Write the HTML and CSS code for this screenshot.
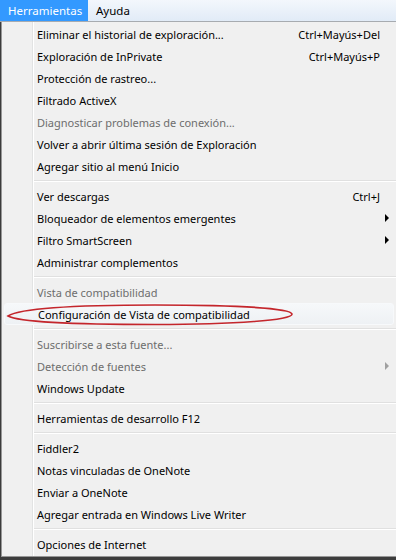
FILE: index.html
```html
<!DOCTYPE html>
<html lang="es">
<head>
<meta charset="utf-8">
<link rel="stylesheet" href="styles.css">
</head>
<body>
<div class="screen">
  <div class="menubar">
    <span class="top active">Herramientas</span>
    <span class="top">Ayuda</span>
  </div>
  <div class="menu">
    <div class="item"><span class="label">Eliminar el historial de exploración...</span><span class="key">Ctrl+Mayús+Del</span></div>
    <div class="item"><span class="label">Exploración de InPrivate</span><span class="key">Ctrl+Mayús+P</span></div>
    <div class="item"><span class="label">Protección de rastreo...</span></div>
    <div class="item"><span class="label">Filtrado ActiveX</span></div>
    <div class="item disabled"><span class="label">Diagnosticar problemas de conexión...</span></div>
    <div class="item"><span class="label">Volver a abrir última sesión de Exploración</span></div>
    <div class="item"><span class="label">Agregar sitio al menú Inicio</span></div>
    <div class="sep"></div>
    <div class="item"><span class="label">Ver descargas</span><span class="key">Ctrl+J</span></div>
    <div class="item"><span class="label">Bloqueador de elementos emergentes</span><span class="arrow"></span></div>
    <div class="item"><span class="label">Filtro SmartScreen</span><span class="arrow"></span></div>
    <div class="item"><span class="label">Administrar complementos</span></div>
    <div class="sep"></div>
    <div class="item disabled"><span class="label">Vista de compatibilidad</span></div>
    <div class="item hover"><span class="label">Configuración de Vista de compatibilidad</span>
      <svg class="ring" width="292" height="24" viewBox="0 0 292 24"><path d="M3 13 C 16 5, 80 2, 150 2 C 240 2, 286 6, 287 11 C 288 17, 230 21.5, 150 21.5 C 70 21.5, 14 19, 3 13 Z" fill="none" stroke="#c4262c" stroke-width="1.6"/></svg>
    </div>
    <div class="sep"></div>
    <div class="item disabled"><span class="label">Suscribirse a esta fuente...</span></div>
    <div class="item disabled"><span class="label">Detección de fuentes</span><span class="arrow"></span></div>
    <div class="item"><span class="label">Windows Update</span></div>
    <div class="sep"></div>
    <div class="item"><span class="label">Herramientas de desarrollo F12</span></div>
    <div class="sep"></div>
    <div class="item"><span class="label">Fiddler2</span></div>
    <div class="item"><span class="label">Notas vinculadas de OneNote</span></div>
    <div class="item"><span class="label">Enviar a OneNote</span></div>
    <div class="item"><span class="label">Agregar entrada en Windows Live Writer</span></div>
    <div class="sep"></div>
    <div class="item"><span class="label">Opciones de Internet</span></div>
  </div>
</div>
</body>
</html>
```
FILE: styles.css
```css
html, body {
  margin: 0;
  padding: 0;
}
body {
  width: 396px;
  height: 560px;
  overflow: hidden;
  background: #3c3c3c;
  font-family: "Noto Sans", "Open Sans", sans-serif;
  font-size: 11px;
  color: #000;
}
.screen {
  width: 396px;
  height: 560px;
  display: flex;
  flex-direction: column;
}
.menubar {
  height: 21px;
  display: flex;
  align-items: stretch;
  background: linear-gradient(#f3f7fc, #e1ebf7);
  border-bottom: 1px solid #a7abb0;
  font-size: 11.5px;
}
.top {
  display: flex;
  align-items: center;
  padding: 0 8px;
  line-height: 1;
}
.top.active {
  background: #3399ff;
  color: #fff;
  padding: 0 0 0 8px;
  width: 80px;
}
.menu {
  position: relative;
  background: #f0f0f0 linear-gradient(90deg, transparent 30px, #e2e3e3 30px, #e2e3e3 31px, #fff 31px, #fff 32px, transparent 32px);
  border-left: 1px solid #979797;
  border-bottom: 1px solid #979797;
  margin-left: 1px;
  padding: 1px 0 0 0;
  height: 533px;
}
.item {
  position: relative;
  height: 22px;
  display: flex;
  align-items: center;
  padding: 0 16px 0 35px;
  white-space: nowrap;
}
.label {
  flex: 1;
}
.key {
  color: #000;
}
.arrow {
  width: 0;
  height: 0;
  border-top: 4px solid transparent;
  border-bottom: 4px solid transparent;
  border-left: 4px solid #000;
  margin-right: -9px;
}
.disabled {
  color: #6d6d6d;
}
.disabled .arrow {
  border-left-color: #a0a0a0;
}
.hover {
  margin: 0 2px;
  padding-left: 33px;
  border: 1px solid #f7f9fb;
  height: 20px;
  border-radius: 3px;
  background: linear-gradient(#f6f8fa, #eef1f4);
}
.ring {
  position: absolute;
  left: 0;
  top: -1px;
}
.sep {
  height: 8px;
  margin-left: 32px;
  background: linear-gradient(transparent 3px, #e0e0e0 3px, #e0e0e0 4px, #fff 4px, #fff 5px, transparent 5px);
}
```
